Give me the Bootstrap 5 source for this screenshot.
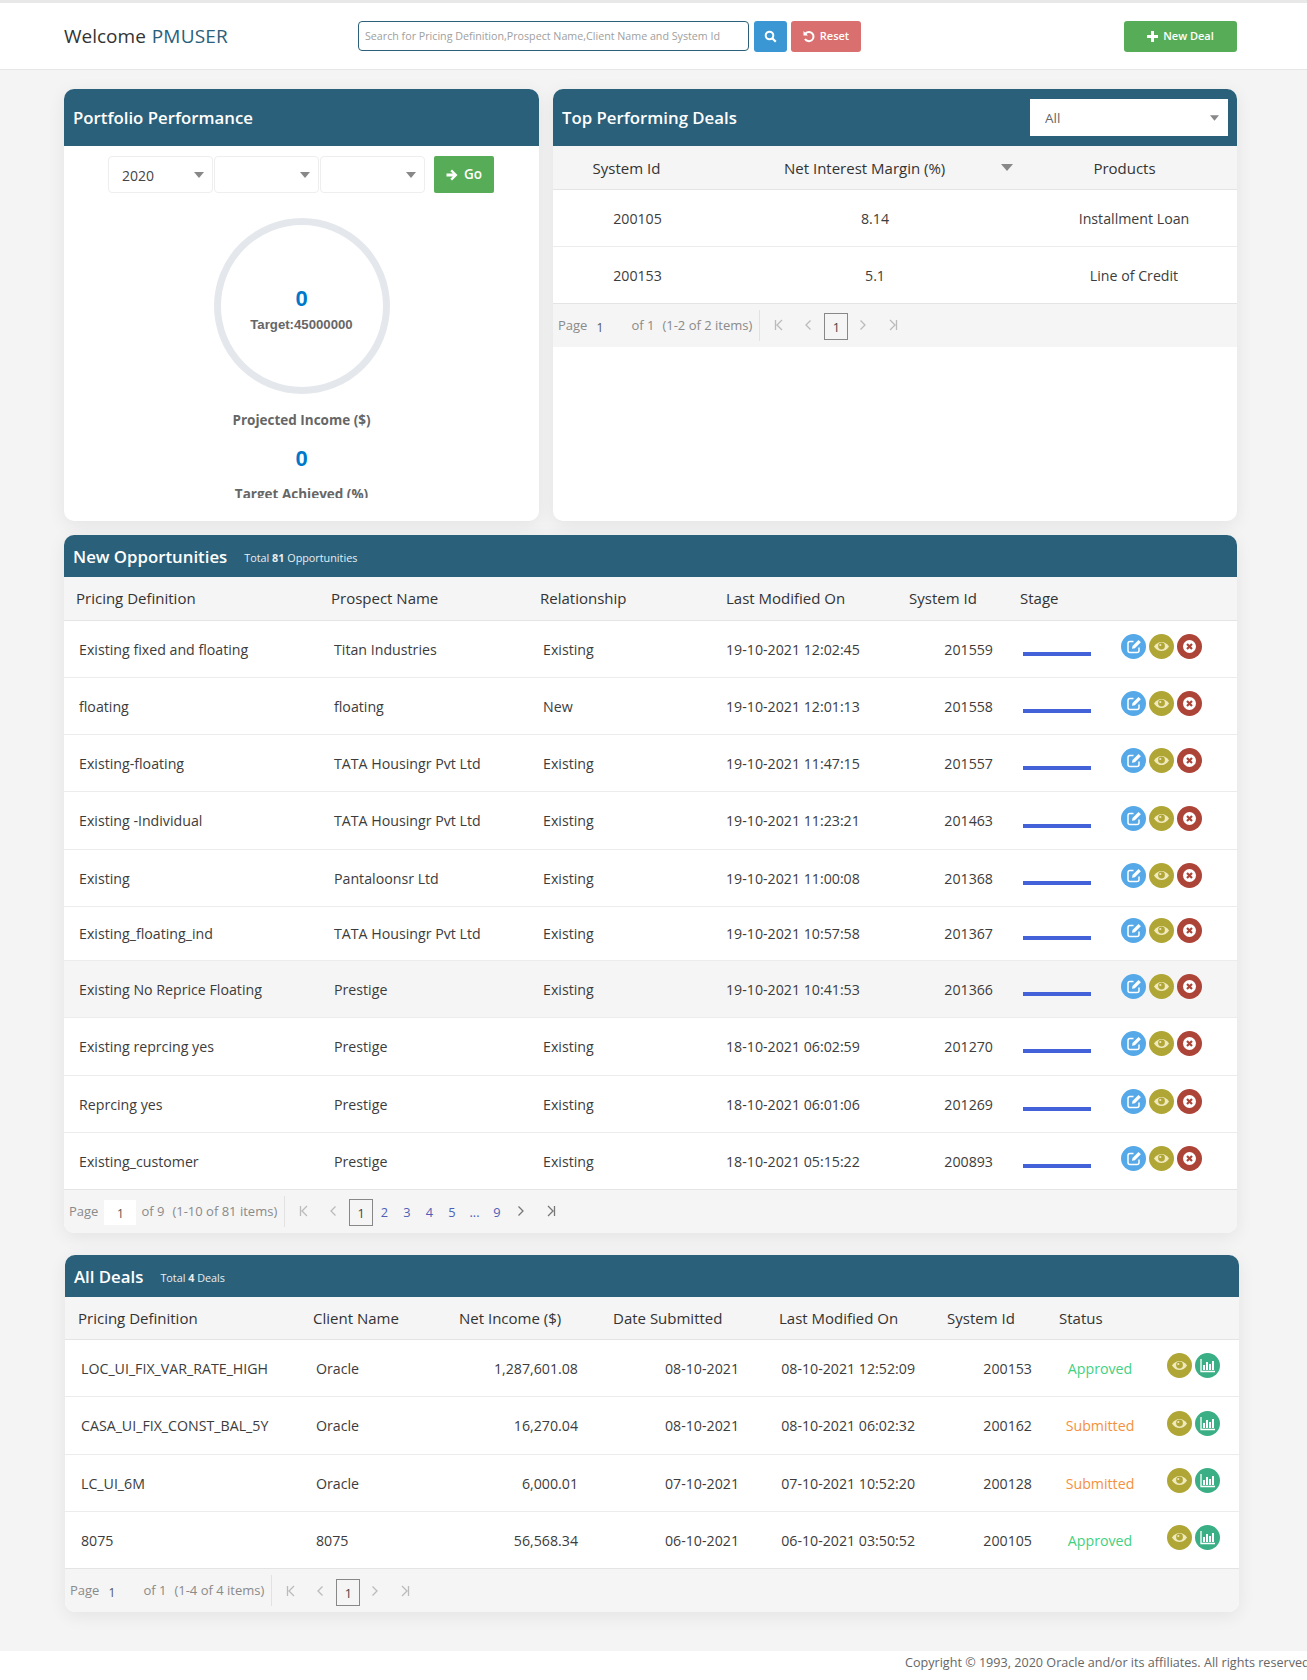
<!DOCTYPE html>
<html lang="en">
<head>
<meta charset="utf-8">
<title>Dashboard</title>
<link rel="stylesheet" href="https://cdn.jsdelivr.net/npm/bootstrap@5.3.0/dist/css/bootstrap.min.css">
<style>
html,body{height:1680px;overflow:hidden}
body{background:#f4f4f4;font-family:"Open Sans","Noto Sans",sans-serif;font-size:14px;color:#3c3c3c;margin:0}
.topbar{height:70px;background:#fff;border-top:3px solid #e8e8e8;border-bottom:1px solid #e6e6e6;padding:0 70px 0 64px}
.hello{width:294px;font-size:19px;font-weight:500;color:#333}
.hello span{color:#2a607a;margin-left:1px;letter-spacing:.2px}
.searchbox{width:391px;height:30px;border:1px solid #2a607a;border-radius:4px;font-size:10.7px;padding:0 6px;color:#888;background:#fff;line-height:28px;font-family:"Open Sans",sans-serif}
.searchbox::placeholder{color:#a0a0a0}
.tbtn{height:31px;border:0;border-radius:3px;color:#fff;font-size:11px;font-weight:600;display:flex;align-items:center;justify-content:center;gap:5px;padding:0}
.tbtn-search{width:33px;background:#3a97d4;margin-left:5px}
.tbtn-reset{width:70px;background:#d96f6e;margin-left:4px}
.tbtn-new{width:113px;background:#57ad57;margin-left:auto}
.stage{padding:19px 70px 0 64px}
.pane{border:0;border-radius:10px;background:#fff;box-shadow:0 4px 18px rgba(0,0,0,.07);overflow:hidden}
.pane-head{background:#2a607a;color:#fff;border:0;border-radius:0;padding:0 9px;display:flex;align-items:center;font-weight:600;font-size:16.8px}
.pane-head.tall{height:57px}
.pane-head.short{height:42px;padding-top:2px}
.pane-head small{font-size:10.8px;font-weight:400;margin-left:17px;padding-top:3px;color:#e8eef1}
.pane-head small b{font-weight:700}
.left-pane{width:475px;height:432px}
.right-pane{width:684px;height:432px;margin-left:14px}
.pick,.dealpick{background-image:url("data:image/svg+xml,%3Csvg xmlns='http://www.w3.org/2000/svg' viewBox='0 0 10 6'%3E%3Cpath d='M0 0h10L5 6z' fill='%23888'/%3E%3C/svg%3E");background-repeat:no-repeat;background-color:#fff}
.dealpick{width:198px;height:37px;margin-left:auto;border:0;border-radius:0;font-size:13.5px;color:#666;padding:1px 18px 0 15px;background-position:right 9px center;background-size:9px 6px}
.pickrow{padding:10px 0 0 44px}
.pick{width:105px;height:37px;border:1px solid #eee;border-radius:4px;font-size:14px;color:#444;padding:1px 0 0 13px;margin-right:1px;background-position:right 8px center;background-size:10px 6px}
.gobtn{width:60px;height:37px;background:#57ad57;border:0;border-radius:2px;color:#fff;font-size:13.5px;font-weight:600;margin-left:8px;display:flex;align-items:center;justify-content:center;gap:6px;padding:0}
.fold{height:305px;overflow:hidden;text-align:center;font-family:"Liberation Sans",Arial,sans-serif;font-weight:700;color:#666;font-size:13.2px}
.ring{width:176px;height:176px;border:7px solid #e4e8ec;border-radius:50%;margin:25px auto 0;display:flex;flex-direction:column;align-items:center;padding-top:61px}
.bignum{color:#0078c8;font-size:22px;line-height:26px}
.ring .bignum{margin-bottom:5px}
.ring div:last-child{line-height:16px}
.inc{margin-top:17px;line-height:18px;font-family:"Open Sans",sans-serif;font-size:13.5px}
.inc2{margin-top:17px;line-height:26px}
.inc3{margin-top:13px;line-height:18px;font-family:"Open Sans",sans-serif;font-size:13.5px}
.grid{table-layout:fixed;margin:0;width:100%;color:#3c3c3c;font-size:14.2px}
.grid th{background:#f5f5f5;font-weight:400;font-size:15px;color:#333;padding:0 0 0 12px;height:43px;vertical-align:middle;border-bottom:1px solid #e4e4e4;white-space:nowrap}
.grid td{padding:1px 0 0 15px;vertical-align:middle;height:57.3px;border-bottom:1px solid #ececec;white-space:nowrap;background:#fff}
.grid tr.lowrow td{height:54px}
.grid tr.hot td{background:#f5f5f5}
.grid tbody tr:last-child td{border-bottom:1px solid #e4e4e4}
.grid td.datecell{padding-left:12px}
.grid td.right{text-align:right;padding-left:0;padding-right:15px}
.grid td.pr24{padding-right:23px}
.grid td.pr28{padding-right:28px}
.grid td.pr20{padding-right:20px}
.grid td.statuscell{padding:1px 1px 0 0;text-align:center}
.grid td.actcell{padding-left:11px}
.grid td.actcell2{padding-left:13px}
.deal-pane .grid th:first-child{padding-left:13px}
.deal-pane .grid td:first-child{padding-left:16px}
.cols-top col:nth-child(1){width:157px}
.cols-top col:nth-child(2){width:330px}
.cols-opp col:nth-child(1){width:255px}
.cols-opp col:nth-child(2){width:209px}
.cols-opp col:nth-child(3){width:186px}
.cols-opp col:nth-child(4){width:183px}
.cols-opp col:nth-child(5){width:111px}
.cols-opp col:nth-child(6){width:102px}
.cols-deal col:nth-child(1){width:236px}
.cols-deal col:nth-child(2){width:146px}
.cols-deal col:nth-child(3){width:154px}
.cols-deal col:nth-child(4){width:166px}
.cols-deal col:nth-child(5){width:168px}
.cols-deal col:nth-child(6){width:112px}
.cols-deal col:nth-child(7){width:107px}
.centered th,.centered td{text-align:center}
.grid.centered th.th-a{padding:2px 10px 0 0}
.grid.centered th.th-b{padding:2px 0 0 74px;text-align:left}
.grid.centered th.th-c{padding:2px 28px 0 0}
.grid.centered td.td-a{padding:1px 0 0 12px}
.grid.centered td.td-b{padding:1px 0 0}
.grid.centered td.td-c{padding:1px 9px 0 0}
.sortmark{display:inline-block;border:6px solid transparent;border-top:7px solid #888;border-bottom:0;margin-left:56px;vertical-align:3px}
.pipe{width:68px;height:4px;background:#4361d8;margin:9px 0 0 0}
.acts{display:flex;gap:3px;margin-top:-6px}
.ic{width:25px;height:25px;border-radius:50%;flex:none;display:block}
.ic-blue{background:#56a9e8}.ic-olive{background:#b0a636}.ic-red{background:#ad4438}.ic-green{background:#3aaf85}
.st-ok{color:#42d17f}.st-sub{color:#f5913c}
.pager{display:flex;align-items:center;background:#f5f5f5;height:42.5px;color:#8a8a8a;font-size:13px;padding-left:5px}
.pg-input{width:32px;height:25px;background:#fff;text-align:center;color:#555;margin:2px 5px 0 6px;line-height:27px;font-size:12px}
.pg-input.flat{background:none;width:44px;margin:2px 0 0;text-align:left;padding-left:9px}
.pg-sep{width:1px;height:31px;background:#e2e2e2;margin:0 14px 0 7px}
.pg-ar{width:9px;height:12px;flex:none;stroke:#bbb;fill:none;stroke-width:1.3}
.pg-ar.on{stroke:#777}
.pg-ar.m21{margin-left:21px}
.pg-ar.m22{margin-left:22px}
.pg-ar.m10{margin-left:10px}
.pg-cur{width:24px;height:27px;border:1px solid #888;color:#444;text-align:center;line-height:27px;margin:3px 0 0 11px;font-size:12.6px}
.pg-n{color:#4f5fb5;width:22.5px;text-align:center;margin-top:3px;font-size:12.8px}
.foot{margin-top:39px;height:29px;background:#fff;padding-left:905px;font-size:12.6px;color:#666;line-height:24px;white-space:nowrap;overflow:hidden}
.sym{display:none}
.opp-pane{margin-top:14px}
.deal-pane{margin:22px -2px 0 1px}
</style>
</head>
<body>
<svg class="sym" aria-hidden="true">
<symbol id="i-edit" viewBox="0 0 25 25"><path d="M12.5 7.5H9A2 2 0 0 0 7 9.500v7a2 2 0 0 0 2 2h7a2 2 0 0 0 2-2v-3" fill="none" stroke="#fff" stroke-width="1.500"/><path d="M11 14.800l.5-2.800 6-6 2.400 2.300-6 6z" fill="#fff"/></symbol>
<symbol id="i-eye" viewBox="0 0 25 25"><path d="M5 12.500c2-3 4.500-4.600 7.500-4.600s5.500 1.600 7.500 4.600c-2 3-4.500 4.600-7.500 4.600S7 15.500 5 12.500z" fill="#efe9bd"/><circle cx="12.500" cy="12" r="3.400" fill="#b0a636"/><circle cx="11.300" cy="11" r="1.100" fill="#efe9bd"/></symbol>
<symbol id="i-x" viewBox="0 0 25 25"><circle cx="12.500" cy="12.500" r="6.500" fill="#fff"/><path d="M10 10l5 5m0-5l-5 5" stroke="#ad4438" stroke-width="2.200" fill="none"/></symbol>
<symbol id="i-chart" viewBox="0 0 25 25"><path d="M6 6v12.500h14" fill="none" stroke="#fff" stroke-width="1.300"/><path d="M8 12h2v5H8zM11 9h2v8h-2zM14 11h2v6h-2zM17 8h2v9h-2z" fill="#fff"/></symbol>
<symbol id="p-first" viewBox="0 0 9 12"><path d="M1.500 1v10M8 1L3 6l5 5"/></symbol>
<symbol id="p-prev" viewBox="0 0 9 12"><path d="M6.500 1.500L2 6l4.500 4.500"/></symbol>
<symbol id="p-next" viewBox="0 0 9 12"><path d="M2.500 1.500L7 6l-4.500 4.500"/></symbol>
<symbol id="p-last" viewBox="0 0 9 12"><path d="M7.500 1v10M1 1l5 5-5 5"/></symbol>
</svg>

<header class="topbar d-flex align-items-center">
  <div class="hello">Welcome <span>PMUSER</span></div>
  <input class="searchbox" type="text" placeholder="Search for Pricing Definition,Prospect Name,Client Name and System Id">
  <button class="btn tbtn tbtn-search" type="button" aria-label="Search"><svg width="13" height="13" viewBox="0 0 13 13"><circle cx="5.500" cy="5.500" r="3.800" fill="none" stroke="#fff" stroke-width="2"/><path d="M8.300 8.300l3.500 3.500" stroke="#fff" stroke-width="2.200"/></svg></button>
  <button class="btn tbtn tbtn-reset" type="button"><svg width="12" height="13" viewBox="0 0 12 13"><path d="M2.500 3.500A4.600 4.600 0 1 1 2 9" fill="none" stroke="#fff" stroke-width="2"/><path d="M.5 1v4.500H5z" fill="#fff"/></svg>Reset</button>
  <button class="btn tbtn tbtn-new" type="button"><svg width="11" height="11" viewBox="0 0 11 11"><path d="M4 0h3v4h4v3H7v4H4V7H0V4h4z" fill="#fff"/></svg>New Deal</button>
</header>

<main class="stage">
  <div class="d-flex">
    <section class="card pane left-pane">
      <div class="card-header pane-head tall">Portfolio Performance</div>
      <div class="pickrow d-flex">
        <select class="form-select pick" aria-label="Year"><option>2020</option></select>
        <select class="form-select pick" aria-label="Quarter"><option></option></select>
        <select class="form-select pick" aria-label="Month"><option></option></select>
        <button class="btn gobtn" type="button"><svg width="12" height="12" viewBox="0 0 12 12"><path d="M6 .5L11.500 6 6 11.500 4.300 9.800 6.800 7.400H.5V4.600h6.300L4.300 2.200z" fill="#fff"/></svg>Go</button>
      </div>
      <div class="fold">
        <div class="ring"><div class="bignum">0</div><div>Target:45000000</div></div>
        <div class="inc">Projected Income ($)</div>
        <div class="inc2 bignum">0</div>
        <div class="inc3">Target Achieved (%)</div>
      </div>
    </section>
    <section class="card pane right-pane">
      <div class="card-header pane-head tall">Top Performing Deals
        <select class="form-select dealpick" aria-label="Deal type"><option>All</option></select>
      </div>
      <table class="table grid centered">
        <colgroup class="cols-top"><col><col><col></colgroup>
        <thead><tr><th class="th-a">System Id</th><th class="th-b">Net Interest Margin (%)<span class="sortmark"></span></th><th class="th-c">Products</th></tr></thead>
        <tbody>
          <tr><td class="td-a">200105</td><td class="td-b">8.14</td><td class="td-c">Installment Loan</td></tr>
          <tr><td class="td-a">200153</td><td class="td-b">5.1</td><td class="td-c">Line of Credit</td></tr>
        </tbody>
      </table>
      <div class="pager">
        <span>Page</span><span class="pg-input flat">1</span><span>of 1</span><span class="ms-2">(1-2 of 2 items)</span><span class="pg-sep"></span>
        <svg class="pg-ar"><use href="#p-first"/></svg><svg class="pg-ar m21"><use href="#p-prev"/></svg>
        <span class="pg-cur">1</span>
        <svg class="pg-ar m10"><use href="#p-next"/></svg><svg class="pg-ar m22"><use href="#p-last"/></svg>
      </div>
    </section>
  </div>

  <section class="card pane opp-pane">
    <div class="card-header pane-head short">New Opportunities <small>Total <b>81</b> Opportunities</small></div>
    <table class="table grid">
      <colgroup class="cols-opp"><col><col><col><col><col><col><col></colgroup>
      <thead><tr><th>Pricing Definition</th><th>Prospect Name</th><th>Relationship</th><th>Last Modified On</th><th>System Id</th><th>Stage</th><th></th></tr></thead>
      <tbody>
        <tr><td>Existing fixed and floating</td><td>Titan Industries</td><td>Existing</td><td class="datecell">19-10-2021 12:02:45</td><td class="right">201559</td><td><div class="pipe"></div></td><td class="actcell"><div class="acts"><svg class="ic ic-blue"><use href="#i-edit"/></svg><svg class="ic ic-olive"><use href="#i-eye"/></svg><svg class="ic ic-red"><use href="#i-x"/></svg></div></td></tr>
        <tr><td>floating</td><td>floating</td><td>New</td><td class="datecell">19-10-2021 12:01:13</td><td class="right">201558</td><td><div class="pipe"></div></td><td class="actcell"><div class="acts"><svg class="ic ic-blue"><use href="#i-edit"/></svg><svg class="ic ic-olive"><use href="#i-eye"/></svg><svg class="ic ic-red"><use href="#i-x"/></svg></div></td></tr>
        <tr><td>Existing-floating</td><td>TATA Housingr Pvt Ltd</td><td>Existing</td><td class="datecell">19-10-2021 11:47:15</td><td class="right">201557</td><td><div class="pipe"></div></td><td class="actcell"><div class="acts"><svg class="ic ic-blue"><use href="#i-edit"/></svg><svg class="ic ic-olive"><use href="#i-eye"/></svg><svg class="ic ic-red"><use href="#i-x"/></svg></div></td></tr>
        <tr><td>Existing -Individual</td><td>TATA Housingr Pvt Ltd</td><td>Existing</td><td class="datecell">19-10-2021 11:23:21</td><td class="right">201463</td><td><div class="pipe"></div></td><td class="actcell"><div class="acts"><svg class="ic ic-blue"><use href="#i-edit"/></svg><svg class="ic ic-olive"><use href="#i-eye"/></svg><svg class="ic ic-red"><use href="#i-x"/></svg></div></td></tr>
        <tr><td>Existing</td><td>Pantaloonsr Ltd</td><td>Existing</td><td class="datecell">19-10-2021 11:00:08</td><td class="right">201368</td><td><div class="pipe"></div></td><td class="actcell"><div class="acts"><svg class="ic ic-blue"><use href="#i-edit"/></svg><svg class="ic ic-olive"><use href="#i-eye"/></svg><svg class="ic ic-red"><use href="#i-x"/></svg></div></td></tr>
        <tr class="lowrow"><td>Existing_floating_ind</td><td>TATA Housingr Pvt Ltd</td><td>Existing</td><td class="datecell">19-10-2021 10:57:58</td><td class="right">201367</td><td><div class="pipe"></div></td><td class="actcell"><div class="acts"><svg class="ic ic-blue"><use href="#i-edit"/></svg><svg class="ic ic-olive"><use href="#i-eye"/></svg><svg class="ic ic-red"><use href="#i-x"/></svg></div></td></tr>
        <tr class="hot"><td>Existing No Reprice Floating</td><td>Prestige</td><td>Existing</td><td class="datecell">19-10-2021 10:41:53</td><td class="right">201366</td><td><div class="pipe"></div></td><td class="actcell"><div class="acts"><svg class="ic ic-blue"><use href="#i-edit"/></svg><svg class="ic ic-olive"><use href="#i-eye"/></svg><svg class="ic ic-red"><use href="#i-x"/></svg></div></td></tr>
        <tr><td>Existing reprcing yes</td><td>Prestige</td><td>Existing</td><td class="datecell">18-10-2021 06:02:59</td><td class="right">201270</td><td><div class="pipe"></div></td><td class="actcell"><div class="acts"><svg class="ic ic-blue"><use href="#i-edit"/></svg><svg class="ic ic-olive"><use href="#i-eye"/></svg><svg class="ic ic-red"><use href="#i-x"/></svg></div></td></tr>
        <tr><td>Reprcing yes</td><td>Prestige</td><td>Existing</td><td class="datecell">18-10-2021 06:01:06</td><td class="right">201269</td><td><div class="pipe"></div></td><td class="actcell"><div class="acts"><svg class="ic ic-blue"><use href="#i-edit"/></svg><svg class="ic ic-olive"><use href="#i-eye"/></svg><svg class="ic ic-red"><use href="#i-x"/></svg></div></td></tr>
        <tr><td>Existing_customer</td><td>Prestige</td><td>Existing</td><td class="datecell">18-10-2021 05:15:22</td><td class="right">200893</td><td><div class="pipe"></div></td><td class="actcell"><div class="acts"><svg class="ic ic-blue"><use href="#i-edit"/></svg><svg class="ic ic-olive"><use href="#i-eye"/></svg><svg class="ic ic-red"><use href="#i-x"/></svg></div></td></tr>
      </tbody>
    </table>
    <div class="pager">
      <span>Page</span><span class="pg-input">1</span><span>of 9</span><span class="ms-2">(1-10 of 81 items)</span><span class="pg-sep"></span>
      <svg class="pg-ar"><use href="#p-first"/></svg><svg class="pg-ar m21"><use href="#p-prev"/></svg>
      <span class="pg-cur">1</span><span class="pg-n">2</span><span class="pg-n">3</span><span class="pg-n">4</span><span class="pg-n">5</span><span class="pg-n">...</span><span class="pg-n">9</span>
      <svg class="pg-ar on ms-2"><use href="#p-next"/></svg><svg class="pg-ar on m22"><use href="#p-last"/></svg>
    </div>
  </section>

  <section class="card pane deal-pane">
    <div class="card-header pane-head short">All Deals <small>Total <b>4</b> Deals</small></div>
    <table class="table grid">
      <colgroup class="cols-deal"><col><col><col><col><col><col><col><col></colgroup>
      <thead><tr><th>Pricing Definition</th><th>Client Name</th><th>Net Income ($)</th><th>Date Submitted</th><th>Last Modified On</th><th>System Id</th><th>Status</th><th></th></tr></thead>
      <tbody>
        <tr><td>LOC_UI_FIX_VAR_RATE_HIGH</td><td>Oracle</td><td class="right pr24">1,287,601.08</td><td class="right pr28">08-10-2021</td><td class="right pr20">08-10-2021 12:52:09</td><td class="right">200153</td><td class="statuscell st-ok">Approved</td><td class="actcell2"><div class="acts"><svg class="ic ic-olive"><use href="#i-eye"/></svg><svg class="ic ic-green"><use href="#i-chart"/></svg></div></td></tr>
        <tr><td>CASA_UI_FIX_CONST_BAL_5Y</td><td>Oracle</td><td class="right pr24">16,270.04</td><td class="right pr28">08-10-2021</td><td class="right pr20">08-10-2021 06:02:32</td><td class="right">200162</td><td class="statuscell st-sub">Submitted</td><td class="actcell2"><div class="acts"><svg class="ic ic-olive"><use href="#i-eye"/></svg><svg class="ic ic-green"><use href="#i-chart"/></svg></div></td></tr>
        <tr><td>LC_UI_6M</td><td>Oracle</td><td class="right pr24">6,000.01</td><td class="right pr28">07-10-2021</td><td class="right pr20">07-10-2021 10:52:20</td><td class="right">200128</td><td class="statuscell st-sub">Submitted</td><td class="actcell2"><div class="acts"><svg class="ic ic-olive"><use href="#i-eye"/></svg><svg class="ic ic-green"><use href="#i-chart"/></svg></div></td></tr>
        <tr><td>8075</td><td>8075</td><td class="right pr24">56,568.34</td><td class="right pr28">06-10-2021</td><td class="right pr20">06-10-2021 03:50:52</td><td class="right">200105</td><td class="statuscell st-ok">Approved</td><td class="actcell2"><div class="acts"><svg class="ic ic-olive"><use href="#i-eye"/></svg><svg class="ic ic-green"><use href="#i-chart"/></svg></div></td></tr>
      </tbody>
    </table>
    <div class="pager">
      <span>Page</span><span class="pg-input flat">1</span><span>of 1</span><span class="ms-2">(1-4 of 4 items)</span><span class="pg-sep"></span>
      <svg class="pg-ar"><use href="#p-first"/></svg><svg class="pg-ar m21"><use href="#p-prev"/></svg>
      <span class="pg-cur">1</span>
      <svg class="pg-ar m10"><use href="#p-next"/></svg><svg class="pg-ar m22"><use href="#p-last"/></svg>
    </div>
  </section>
</main>

<footer class="foot">Copyright © 1993, 2020 Oracle and/or its affiliates. All rights reserved.</footer>

<script src="https://cdn.jsdelivr.net/npm/bootstrap@5.3.0/dist/js/bootstrap.bundle.min.js"></script>
</body>
</html>
